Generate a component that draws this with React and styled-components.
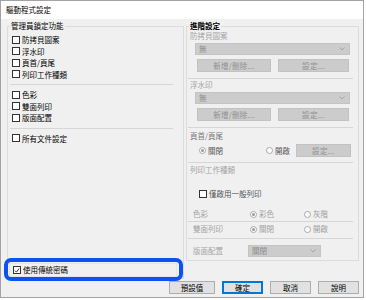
import React from 'react'
import styled, { createGlobalStyle } from 'styled-components'

const Global = createGlobalStyle`
  html, body { margin: 0; padding: 0; background: #fff; }
  body {
    font-family: "Noto Sans CJK TC", "Noto Sans CJK SC", sans-serif;
    font-size: 7.5px;
    color: #000;
  }
  * { box-sizing: border-box; }
`

const Window = styled.div`
  width: 364px;
  height: 298px;
  border: 1px solid #a3a3a3;
  background: #f0f0f0;
  display: flex;
  flex-direction: column;
`

const TitleBar = styled.div`
  height: 18px;
  background: #fff;
  padding-left: 5px;
  display: flex;
  align-items: center;
  line-height: 1;
`

const Body = styled.div`
  display: grid;
  grid-template-columns: 177px 173px;
  column-gap: 2px;
  padding: 7px 0 0 6px;
  align-items: start;
`

const Group = styled.div`
  position: relative;
  border: 1px solid #dcdcdc;
  height: ${p => p.$h}px;
  padding: ${p => p.$pad};
  display: flex;
  flex-direction: column;
`

const Legend = styled.span`
  position: absolute;
  top: -6px;
  left: 2px;
  padding: 0 1px;
  line-height: 10px;
  background: #f0f0f0;
  font-weight: ${p => (p.$bold ? 700 : 400)};
`

const CheckRow = styled.label`
  display: flex;
  align-items: center;
  gap: 2px;
  height: ${p => p.$h || 11.5}px;
  margin-top: ${p => p.$mt || 0}px;
  padding-left: ${p => p.$pl || 0}px;
  color: ${p => p.$color || '#000'};
  line-height: 1;
  white-space: nowrap;
`

const Box = styled.span`
  width: 8px;
  height: 8px;
  border: 1px solid #333;
  background: #fff;
  display: inline-flex;
  align-items: center;
  justify-content: center;
  flex: none;
`

const Sep = styled.div`
  height: 1px;
  background: #d6d6d6;
  margin: ${p => p.$m};
  flex: none;
`

const Spacer = styled.div`
  flex: 1;
`

const LegacyRow = styled.div`
  position: relative;
  display: flex;
  align-items: center;
  gap: 2px;
  height: 14px;
  margin: 0 2px 0 -3px;
  padding-left: 3px;
  border: 1px solid #e4e4e4;
  line-height: 1;
`

const Highlight = styled.span`
  position: absolute;
  top: -6px;
  left: -6px;
  right: -7px;
  bottom: -5px;
  border: 4px solid #0a52f2;
  border-radius: 7px;
  pointer-events: none;
  z-index: 2;
`

const FieldLabel = styled.div`
  height: 10px;
  line-height: 10px;
  margin-top: ${p => p.$mt || 0}px;
  color: ${p => p.$color || '#a3a3a3'};
  white-space: nowrap;
`

const Select = styled.div`
  width: ${p => p.$w}px;
  height: 12px;
  margin-top: ${p => p.$mt || 0}px;
  margin-left: ${p => p.$ml || 0}px;
  background: #cccccc;
  border: 1px solid #c4c4c4;
  display: flex;
  align-items: center;
  justify-content: space-between;
  padding: 0 4px 0 3px;
  color: #8a8a8a;
  line-height: 1;
  flex: none;
`

const BtnRow = styled.div`
  display: flex;
  gap: 7px;
  height: 13px;
  margin-top: ${p => p.$mt || 0}px;
  margin-left: ${p => p.$ml || 0}px;
`

const DisabledButton = styled.div`
  width: ${p => p.$w}px;
  height: 13px;
  background: #cccccc;
  border: 1px solid #c2c2c2;
  color: #8f8f8f;
  display: flex;
  align-items: center;
  justify-content: center;
  line-height: 1;
  letter-spacing: 0.3px;
  flex: none;
`

const RadioRow = styled.div`
  display: flex;
  align-items: center;
  height: 13px;
  margin-top: ${p => p.$mt || 0}px;
  padding-left: 9px;
`

const Radio = styled.span`
  display: inline-flex;
  align-items: center;
  gap: 2px;
  width: ${p => (p.$w ? `${p.$w}px` : 'auto')};
  color: ${p => p.$color || '#a0a0a0'};
  line-height: 1;
  white-space: nowrap;
  flex: none;
`

const Dot = styled.span`
  width: 7px;
  height: 7px;
  border-radius: 50%;
  border: 1px solid #a8a8a8;
  background: #fff;
  display: inline-flex;
  align-items: center;
  justify-content: center;
  &::after {
    content: '';
    width: 3px;
    height: 3px;
    border-radius: 50%;
    background: ${p => (p.$on ? '#9a9a9a' : 'transparent')};
  }
`

const OptionRow = styled.div`
  display: grid;
  grid-template-columns: 57px 54px 1fr;
  align-items: center;
  height: ${p => p.$h || 12}px;
  margin-top: ${p => p.$mt || 0}px;
  padding-left: 3px;
  color: #a3a3a3;
  line-height: 1;
  white-space: nowrap;
`

const Footer = styled.div`
  grid-column: 1 / -1;
  display: flex;
  justify-content: flex-end;
  gap: 7px;
  margin-top: 2px;
`

const DialogButton = styled.button`
  width: ${p => p.$w}px;
  height: 13px;
  padding: 0;
  font: inherit;
  line-height: 1;
  color: #000;
  background: #e1e1e1;
  border: 1px solid ${p => (p.$primary ? '#0078d7' : '#adadad')};
  box-shadow: ${p => (p.$primary ? 'inset 0 0 0 1px #0078d7' : 'none')};
`

const Chevron = () => (
  <svg width="6" height="4" viewBox="0 0 6 4">
    <polyline points="0.5,0.5 3,3 5.5,0.5" fill="none" stroke="#a0a0a0" strokeWidth="0.9" />
  </svg>
)

const Check = () => (
  <svg width="7" height="7" viewBox="0 0 7 7">
    <polyline points="1,3.6 2.8,5.4 6,1.2" fill="none" stroke="#111" strokeWidth="1" />
  </svg>
)

const Checkbox = ({ children, checked, ...rest }) => (
  <CheckRow {...rest}>
    <Box>{checked && <Check />}</Box>
    <span>{children}</span>
  </CheckRow>
)

const lockItems = [['防拷貝圖案', '浮水印', '頁首/頁尾', '列印工作種類'], ['色彩', '雙面列印', '版面配置'], ['所有文件設定']]

export default function App() {
  return (
    <>
      <Global />
      <Window>
        <TitleBar>驅動程式設定</TitleBar>
        <Body>
          <Group $h={253} $pad="7px 4px 1px 4px">
            <Legend>管理員鎖定功能</Legend>
            {lockItems.map((group, i) => (
              <React.Fragment key={i}>
                {i > 0 && <Sep $m="4px 6px 4px -2px" />}
                {group.map(item => (
                  <Checkbox key={item}>{item}</Checkbox>
                ))}
              </React.Fragment>
            ))}
            <Spacer />
            <LegacyRow>
              <Highlight />
              <Box><Check /></Box>
              <span>使用傳統密碼</span>
            </LegacyRow>
          </Group>

          <Group $h={235} $pad="4px 3px 0 3px">
            <Legend $bold>進階設定</Legend>
            {['防拷貝圖案', '浮水印'].map((name, i) => (
              <React.Fragment key={name}>
                <FieldLabel>{name}</FieldLabel>
                <Select $w={155} $ml={5} $mt={2}>
                  <span>無</span>
                  <Chevron />
                </Select>
                <BtnRow $mt={4} $ml={7}>
                  <DisabledButton $w={74}>新增/刪除...</DisabledButton>
                  <DisabledButton $w={71}>設定...</DisabledButton>
                </BtnRow>
                <Sep $m={i === 0 ? '6px 2px 1px -2px' : '6px 2px 3px -2px'} />
              </React.Fragment>
            ))}
            <FieldLabel $color="#7a7a7a">頁首/頁尾</FieldLabel>
            <RadioRow $mt={3}>
              <Radio $w={67} $color="#555"><Dot $on />關閉</Radio>
              <Radio $w={30} $color="#555"><Dot />開啟</Radio>
              <DisabledButton $w={55}>設定...</DisabledButton>
            </RadioRow>
            <Sep $m="5px 2px 2px -2px" />
            <FieldLabel>列印工作種類</FieldLabel>
            <Checkbox $h={10} $mt={14} $pl={9} $color="#555">僅啟用一般列印</Checkbox>
            <OptionRow $mt={9}>
              <span>色彩</span>
              <Radio><Dot $on />彩色</Radio>
              <Radio><Dot />灰階</Radio>
            </OptionRow>
            <Sep $m="1px 2px 1px -2px" />
            <OptionRow>
              <span>雙面列印</span>
              <Radio><Dot $on />關閉</Radio>
              <Radio><Dot />開啟</Radio>
            </OptionRow>
            <Sep $m="3px 2px 5px -2px" />
            <OptionRow $h={13}>
              <span>版面配置</span>
              <Select $w={73} $ml={-2}>
                <span>關閉</span>
                <Chevron />
              </Select>
            </OptionRow>
          </Group>

          <Footer>
            <DialogButton $w={46}>預設值</DialogButton>
            <DialogButton $w={41} $primary>確定</DialogButton>
            <DialogButton $w={41}>取消</DialogButton>
            <DialogButton $w={41}>說明</DialogButton>
          </Footer>
        </Body>
      </Window>
    </>
  )
}
